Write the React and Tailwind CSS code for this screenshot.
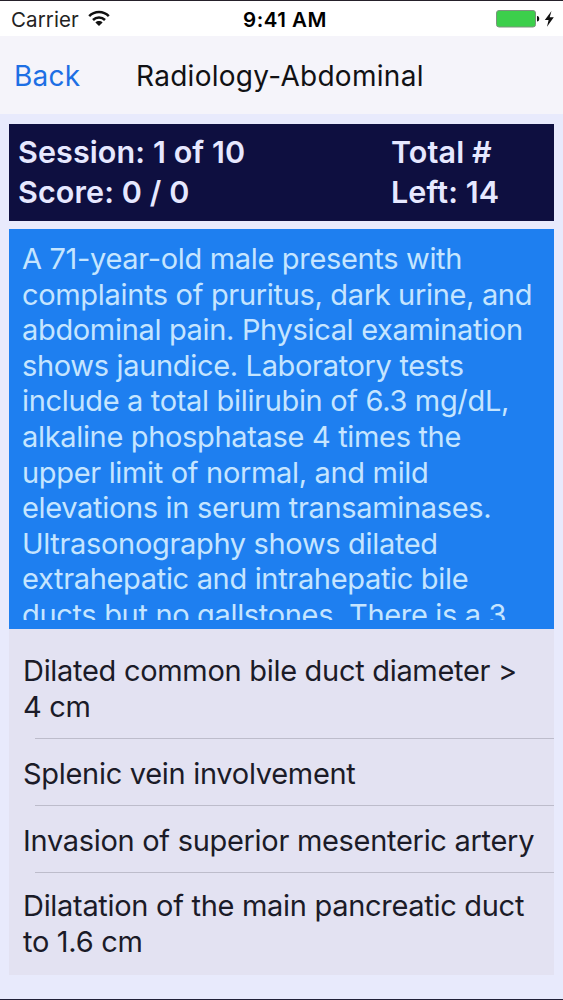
import React from "react";

const questionLines = [
  "A 71-year-old male presents with",
  "complaints of pruritus, dark urine, and",
  "abdominal pain. Physical examination",
  "shows jaundice. Laboratory tests",
  "include a total bilirubin of 6.3 mg/dL,",
  "alkaline phosphatase 4 times the",
  "upper limit of normal, and mild",
  "elevations in serum transaminases.",
  "Ultrasonography shows dilated",
  "extrahepatic and intrahepatic bile",
  "ducts but no gallstones. There is a 3",
];

const answers = [
  {
    lines: ["Dilated common bile duct diameter >", "4 cm"],
    size: "h-[110px] pt-[10px]",
  },
  { lines: ["Splenic vein involvement"], size: "h-[67px] pt-[3px]" },
  { lines: ["Invasion of superior mesenteric artery"], size: "h-[67px] pt-[3px]" },
  {
    lines: ["Dilatation of the main pancreatic duct", "to 1.6 cm"],
    size: "h-[102px]",
  },
];

function WifiIcon() {
  return (
    <svg width="22" height="17" viewBox="0 0 22 17" fill="none" stroke="#111" strokeWidth="2.5">
      <path d="M1.2 6.2C6.6 0.7 15.4 0.7 20.8 6.2" />
      <path d="M5 10C8.3 6.7 13.7 6.7 17 10" />
      <path d="M11 16L7.4 12.5C9.4 10.6 12.6 10.6 14.6 12.5Z" fill="#111" stroke="none" />
    </svg>
  );
}

function BatteryIcon() {
  return (
    <svg width="60" height="20" viewBox="0 0 60 20">
      <rect x="0.5" y="1.5" width="39" height="16.5" rx="2.5" fill="#3ccf4b" stroke="#7c947e" />
      <path d="M41 7C44 7 44 12.5 41 12.5Z" fill="#111" />
      <path d="M55.5 2L48.8 10.9H52.6L51 17.7L57.8 8.3H53.7Z" fill="#111" />
    </svg>
  );
}

function StatusBar() {
  return (
    <div className="grid h-9 grid-cols-3 items-center border-t border-[#25202a] bg-white text-black">
      <div className="flex items-center gap-[9px] pl-[11px]">
        <span className="pt-[3px] text-[20.5px] tracking-[0.1px] text-[#222]">Carrier</span>
        <WifiIcon />
      </div>
      <div className="pt-[3px] pl-[7px] text-center text-[20.5px] font-semibold tracking-[0.5px] whitespace-nowrap">
        9:41 AM
      </div>
      <div className="flex justify-end pr-[7px]">
        <BatteryIcon />
      </div>
    </div>
  );
}

function NavBar() {
  return (
    <div className="flex h-[78px] items-center bg-[#f5f4fa] pt-[2px] pl-[14px] text-[28px] leading-9 whitespace-nowrap">
      <button className="w-[122px] text-left tracking-[0.2px] text-[#1d6fe4]">Back</button>
      <h1 className="tracking-[0.28px] text-[#111114]">Radiology-Abdominal</h1>
    </div>
  );
}

function ScorePanel() {
  return (
    <div className="flex h-[97px] bg-[#0e0f40] pt-2 pl-[9px] text-[30.5px] leading-[40.4px] font-semibold tracking-[0.1px] whitespace-nowrap text-[#e6e8ff]">
      <div className="w-[373px]">
        <p>Session: 1 of 10</p>
        <p>Score: 0 / 0</p>
      </div>
      <div>
        <p>Total #</p>
        <p>Left: 14</p>
      </div>
    </div>
  );
}

function Question() {
  return (
    <div className="mt-2 h-[400px] bg-[#1e7ff0] px-[13px] py-[9px]">
      {/* the last line is cut by the scroll area */}
      <div className="h-full overflow-hidden pt-[3px] text-[29px] leading-[35.6px] tracking-[-0.33px] whitespace-nowrap text-[#c5e5ff]">
        {questionLines.map((line) => (
          <p key={line}>{line}</p>
        ))}
      </div>
    </div>
  );
}

function AnswerList() {
  return (
    <ul className="h-[346px] bg-[#e3e2f2] text-[29px] leading-[35.6px] tracking-[-0.3px] whitespace-nowrap text-[#1b1b28]">
      {answers.map((answer, idx) => (
        <li key={idx} className={`flex flex-col ${answer.size}`}>
          <div className="flex flex-1 flex-col justify-center pl-[14px]">
            {answer.lines.map((line) => (
              <p key={line}>{line}</p>
            ))}
          </div>
          {idx < answers.length - 1 && <div className="ml-[26px] h-px bg-[#bdbccb]" />}
        </li>
      ))}
    </ul>
  );
}

export default function App() {
  return (
    <div className="flex h-[1000px] w-[563px] flex-col overflow-hidden border-b border-[#202038] bg-[#e8eafc] font-['Inter',sans-serif]">
      <StatusBar />
      <NavBar />
      <main className="pt-[10px] pr-[9px] pl-[9px]">
        <ScorePanel />
        <Question />
        <AnswerList />
      </main>
    </div>
  );
}
